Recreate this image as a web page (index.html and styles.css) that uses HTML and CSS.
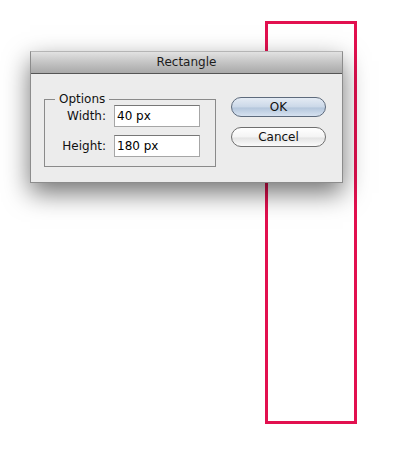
FILE: index.html
```html
<!DOCTYPE html>
<html lang="en">
<head>
    <meta charset="UTF-8">
    <title>Rectangle</title>
    <link rel="stylesheet" href="styles.css">
</head>
<body>
    <div class="canvas">
        <div class="shape"></div>

        <div class="dialog">
            <div class="titlebar">Rectangle</div>
            <div class="dialog-body">
                <fieldset class="options">
                    <legend>Options</legend>
                    <div class="fields">
                        <label for="width">Width:</label>
                        <input type="text" id="width" value="40 px">
                        <label for="height">Height:</label>
                        <input type="text" id="height" value="180 px">
                    </div>
                </fieldset>
                <div class="actions">
                    <button class="btn btn-default">OK</button>
                    <button class="btn">Cancel</button>
                </div>
            </div>
        </div>
    </div>
</body>
</html>
```

FILE: styles.css
```css
body {
    margin: 0;
    background-color: #fff;
    font-family: "DejaVu Sans", sans-serif;
    font-size: 12px;
    color: #111;
}
.canvas {
    position: relative;
    width: 400px;
    height: 450px;
}
/* the drawn rectangle on the artboard */
.shape {
    position: absolute;
    left: 265px;
    top: 21px;
    width: 92px;
    height: 403px;
    box-sizing: border-box;
    border: 3px solid #e2104f;
}
.dialog {
    position: absolute;
    left: 30px;
    top: 51px;
    width: 313px;
    height: 132px;
    box-sizing: border-box;
    border: 1px solid #8c8c8c;
    border-top-color: #b5b5b5;
    background-color: #ececec;
    box-shadow: 0 10px 24px rgba(0, 0, 0, 0.55);
}
.titlebar {
    height: 21px;
    line-height: 21px;
    text-align: center;
    color: #1c1c1c;
    background: linear-gradient(#e2e2e2, #c4c4c4 50%, #a9a9a9);
    border-bottom: 1px solid #555;
}
.dialog-body {
    display: flex;
    gap: 15px;
    padding: 19px 15px 0 13px;
}
.options {
    width: 172px;
    box-sizing: border-box;
    margin: 0;
    padding: 0 15px 9px 10px;
    border: 1px solid #8a8a8a;
}
.options legend {
    padding: 0 4px;
    line-height: 12px;
    color: #111;
}
.fields {
    display: grid;
    grid-template-columns: 51px 86px;
    column-gap: 8px;
    row-gap: 8px;
    align-items: center;
}
.fields label {
    text-align: right;
    white-space: nowrap;
}
.fields input {
    width: 86px;
    height: 22px;
    box-sizing: border-box;
    margin: 0;
    padding: 0 2px;
    font-family: inherit;
    font-size: 12px;
    color: #000;
    background: #fff;
    border: 1px solid #a6a6a6;
    border-top-color: #777;
    outline: none;
}
.actions {
    display: flex;
    flex-direction: column;
    gap: 10px;
    margin-top: 4px;
}
.btn {
    width: 95px;
    height: 20px;
    padding: 0;
    font-family: inherit;
    font-size: 12px;
    color: #111;
    border: 1px solid #6f6f6f;
    border-radius: 10px;
    background: linear-gradient(#ffffff, #f4f4f4 50%, #e4e4e4 55%, #fbfbfb);
}
.btn-default {
    border-color: #5d6a7c;
    background: linear-gradient(#e4ebf4, #cbd8e8 50%, #b4c6dc 55%, #d6e2f0);
}
```
